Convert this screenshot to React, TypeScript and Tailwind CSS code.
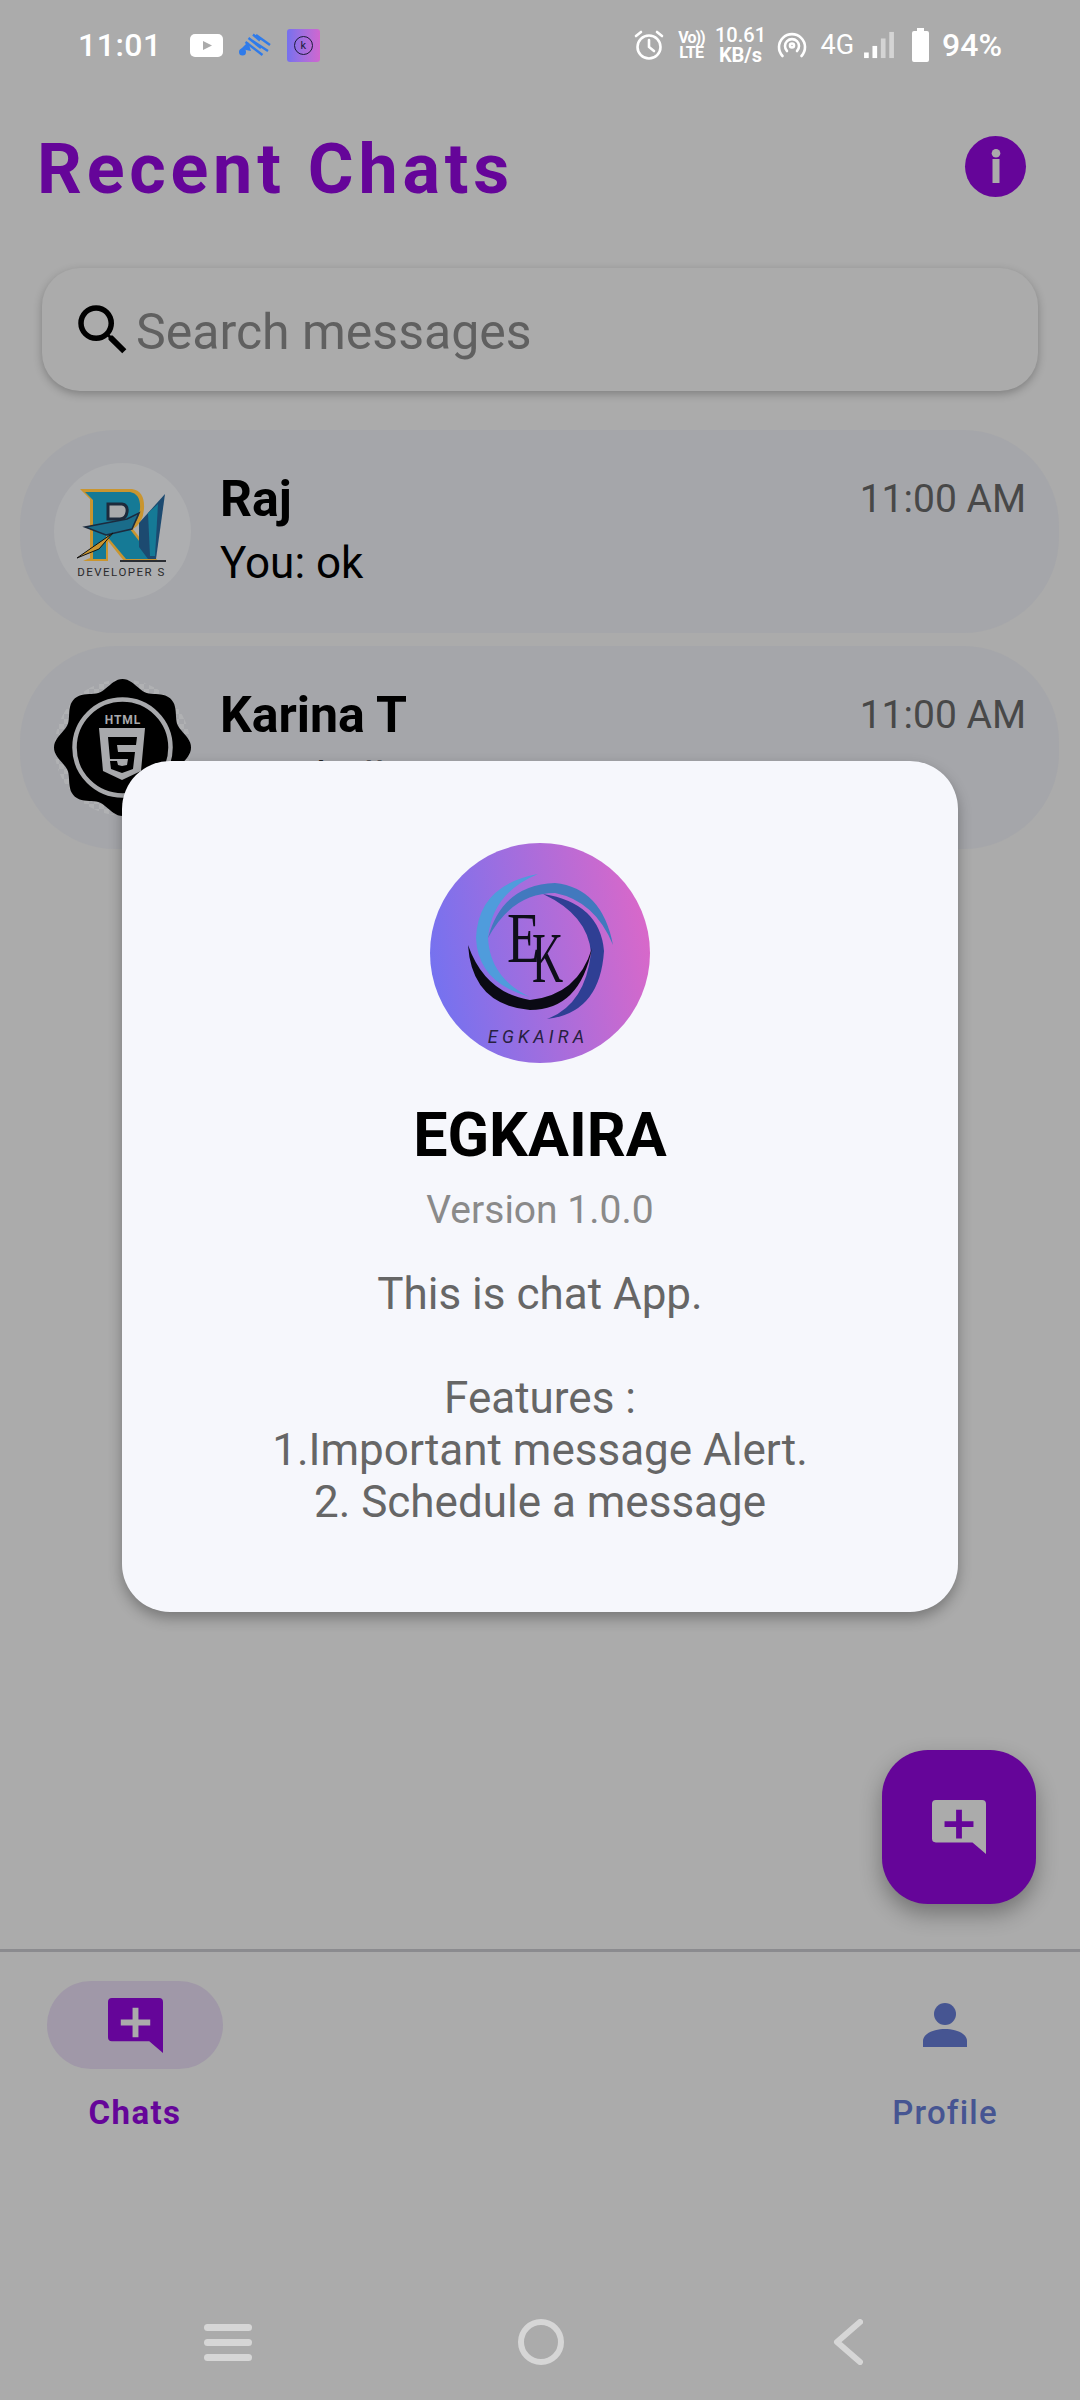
const font = "font-['Roboto',sans-serif]";

// wavy seal outline for the html5 avatar
const sealPath =
  Array.from({ length: 180 }, (_, i) => {
    const t = (i / 180) * Math.PI * 2;
    const r = 64 + 4.5 * Math.cos(8 * t);
    const x = 68.5 + r * Math.sin(t);
    const y = 68.5 - r * Math.cos(t);
    return `${i === 0 ? "M" : "L"}${x.toFixed(1)} ${y.toFixed(1)}`;
  }).join(" ") + "z";

function BubblePlus({ fill, plus, className }: { fill: string; plus: string; className: string }) {
  return (
    <svg viewBox="0 0 56 56" className={className}>
      <path
        d="M4 0h48a4 4 0 0 1 4 4v52L42 44H4a4 4 0 0 1-4-4V4a4 4 0 0 1 4-4z"
        fill={fill}
      />
      <path d="M25 10h6v12h12v6H31v12h-6V28H13v-6h12z" fill={plus} />
    </svg>
  );
}

function StatusBar() {
  return (
    <div className="flex h-[90px] items-center justify-between pl-[78px] pr-[78px] text-white">
      <div className="flex items-center">
        <span className="text-[32px] font-medium leading-none tracking-[0.5px]">11:01</span>
        <svg viewBox="0 0 33 23" className="ml-[28px] h-[23px] w-[33px]">
          <rect width="33" height="23" rx="5" fill="#fff" />
          <path d="M13 7l9 4.500-9 4.500z" fill="#ababab" />
        </svg>
        <svg viewBox="0 0 32 24" className="ml-[16px] h-[24px] w-[32px]">
          <g stroke="#2f7bea" strokeWidth="2.400">
            <path d="M14 1.500l7 6M9.500 5l12.500 10M6.500 9l17 13M12 7l17 11M17 2l14 10" />
          </g>
          <circle cx="3.500" cy="19" r="3.500" fill="#2f7bea" />
          <path d="M2 16L9 9l3 9z" fill="#2f7bea" />
        </svg>
        <div className="relative ml-[16px] flex h-[33px] w-[33px] items-center justify-center rounded-[3px] bg-gradient-to-r from-[#7570ee] to-[#d066cf]">
          <div className="flex h-[19px] w-[19px] items-center justify-center rounded-full border border-[#1b1b3a] text-[11px] leading-none text-[#1b1b3a]">
            k
          </div>
        </div>
      </div>
      <div className="flex items-center">
        {/* alarm */}
        <svg viewBox="0 0 32 32" fill="none" stroke="#fff" strokeWidth="2.600" className="h-[32px] w-[32px]">
          <circle cx="16" cy="18" r="11.500" />
          <path d="M16 11v7l5 4M3 7l5-4M29 7l-5-4" strokeLinecap="round" />
        </svg>
        <div className="ml-[13px] flex w-[26px] flex-col items-center text-[16px] font-bold leading-[15px]">
          <span className="tracking-[-1px]">Vo))</span>
          <span className="tracking-[-0.5px]">LTE</span>
        </div>
        <div className="ml-[12px] flex w-[48px] flex-col items-center text-[20px] font-medium leading-[20px]">
          <span className="whitespace-nowrap">10.61</span>
          <span className="whitespace-nowrap font-bold">KB/s</span>
        </div>
        {/* hotspot */}
        <svg viewBox="0 0 30 28" fill="none" stroke="#fff" strokeWidth="2.600" strokeLinecap="round" className="ml-[13px] h-[28px] w-[30px]">
          <path d="M5.500 25a13 13 0 1 1 19 0" />
          <path d="M10 20a7 7 0 1 1 10 0" />
          <circle cx="15" cy="14.500" r="2" />
        </svg>
        <span className="ml-[13px] text-[27px] font-normal leading-none">4G</span>
        <svg viewBox="0 0 32 30" className="ml-[10px] h-[28px] w-[30px]">
          <rect x="0" y="23" width="5" height="6" fill="#fff" />
          <rect x="9" y="16" width="5" height="13" fill="#fff" />
          <rect x="18" y="8" width="5" height="21" fill="#d4d4d4" />
          <rect x="27" y="1" width="5" height="28" fill="#d4d4d4" />
        </svg>
        <svg viewBox="0 0 17 34" className="ml-[18px] h-[34px] w-[17px]">
          <path d="M5 0h7v3h3a2 2 0 0 1 2 2v27a2 2 0 0 1-2 2H2a2 2 0 0 1-2-2V5a2 2 0 0 1 2-2h3z" fill="#fff" />
        </svg>
        <span className="ml-[13px] text-[32px] font-medium leading-none">94%</span>
      </div>
    </div>
  );
}

function RajLogo() {
  return (
    <svg viewBox="0 0 137 137" className="h-[137px] w-[137px]">
      <circle cx="68.500" cy="68.500" r="68.500" fill="#adaeb0" />
      {/* gold outline, then teal letter on top */}
      <path d="M26 26h52q13 2 12 20-1 14-11 20l25 32H70L54 78v20H29l7-3V36z" fill="#c9952f" />
      <path d="M31 29h45q11 2 10 17-1 13-11 19l24 31H72L52 72v24H39V37z" fill="#157a96" />
      <path d="M54 41h14q6 1 5 8-1 7-7 7H54z" fill="#a9aaac" stroke="#1d2a3c" strokeWidth="3" />
      <path d="M31 64l42-8 12-6-7 16-26 6z" fill="#1a6c8a" stroke="#1c2b3e" strokeWidth="1.500" />
      <path d="M85 60l26-29-9 65H94l-9-12z" fill="#1c4a70" />
      <path d="M94 50l10-9-3 52h-5z" fill="#157a96" />
      <path d="M23 95l36-25-14 16z" fill="#c9952f" stroke="#111" strokeWidth="1" />
      <path d="M66 98h46" stroke="#2a2d33" strokeWidth="2" />
      <text x="67.500" y="113" textAnchor="middle" fontSize="11.500" fontFamily="Roboto" letterSpacing="1.500" fill="#2a2a2c">
        DEVELOPER S
      </text>
    </svg>
  );
}

function HtmlBadge() {
  return (
    <svg viewBox="0 0 137 137" className="h-[137px] w-[137px]">
      <defs>
        <pattern id="checks" width="10" height="10" patternUnits="userSpaceOnUse">
          <rect width="5" height="5" fill="#b0b1b3" />
          <rect x="5" y="5" width="5" height="5" fill="#b0b1b3" />
        </pattern>
      </defs>
      <circle cx="68.500" cy="68.500" r="68" fill="url(#checks)" />
      <path d={sealPath} fill="#000" />
      <circle cx="68.500" cy="68.500" r="48" fill="none" stroke="#a8a9ac" strokeWidth="4.500" />
      <text x="69" y="45" textAnchor="middle" fontSize="12" fontWeight="700" letterSpacing="1" fontFamily="Roboto" fill="#a8a9ac">
        HTML
      </text>
      <path d="M45 49h46l-4 43-19 9-19-9z" fill="#a8a9ac" />
      <path d="M54 58h29l-1 8H63l1 7h17l-2 17-11 4-11-4-1-8h7l1 4 4 1 5-1 1-6H56z" fill="#000" />
    </svg>
  );
}

function EkLogo() {
  return (
    <svg viewBox="0 0 220 220" className="h-[220px] w-[220px]">
      <defs>
        <linearGradient id="ekBg" x1="0" y1="0.6" x2="1" y2="0.4">
          <stop offset="0" stopColor="#7472f0" />
          <stop offset="1" stopColor="#d968c9" />
        </linearGradient>
      </defs>
      <circle cx="110" cy="110" r="110" fill="url(#ekBg)" />
      <path d="M108 31Q48 42 46 95 48 140 100 154 60 135 58 95 62 50 108 31z" fill="#4f9cdc" />
      <path d="M58 95Q72 42 125 40 172 45 183 102 165 58 125 50 82 50 58 95z" fill="#4279be" />
      <path d="M113 51Q170 60 174 108 170 170 117 176 155 162 161 110 158 72 113 51z" fill="#2f3f94" />
      <path d="M38 102Q42 162 100 167 150 167 162 105 148 152 100 157 55 150 38 102z" fill="#0a0a14" />
      <text transform="translate(77 119) scale(0.75 1)" fontSize="72" fontFamily="Liberation Serif" fill="#0e0e1a">E</text>
      <text transform="translate(102 139) scale(0.6 1)" fontSize="72" fontFamily="Liberation Serif" fill="#0e0e1a">K</text>
      <text x="108" y="200" textAnchor="middle" fontSize="18" fontStyle="italic" fontFamily="Roboto" letterSpacing="4.200" fill="#27203f">
        EGKAIRA
      </text>
    </svg>
  );
}

function ChatRow({ name, msg, avatar }: { name: string; msg: string; avatar: React.ReactNode }) {
  return (
    <div className="flex h-[203px] rounded-[96px] bg-[#a5a6aa] pl-[34px] pr-[33px] pt-[33px]">
      {avatar}
      <div className="ml-[29px] flex-1 pt-[4px]">
        <div className="flex items-center justify-between">
          <span className="text-[50px] font-bold leading-[64px] text-black">{name}</span>
          <span className="text-[39px] leading-[64px] text-[#484848]">11:00 AM</span>
        </div>
        <p className="mt-[3px] text-[44px] leading-[58px] text-black">{msg}</p>
      </div>
    </div>
  );
}

export default function App() {
  return (
    <div className={`relative flex h-[2400px] w-[1080px] flex-col overflow-hidden bg-[#ababab] ${font}`}>
      <StatusBar />

      <div className="mt-[34px] flex items-center justify-between pl-[37px] pr-[54px]">
        <h1 className="text-[70px] font-bold leading-[90px] tracking-[4.800px] text-[#650599]">Recent Chats</h1>
        <div className="-mt-[6px] flex h-[61px] w-[61px] items-center justify-center rounded-full bg-[#650599]">
          <svg viewBox="0 0 10 34" className="h-[34px] w-[10px]">
            <circle cx="5" cy="4.300" r="4.300" fill="#ababab" />
            <rect x="1.500" y="10" width="7" height="24" fill="#ababab" />
          </svg>
        </div>
      </div>

      <div className="mx-[42px] mt-[54px] flex h-[123px] items-center rounded-[38px] bg-[#ababab] pl-[28px] shadow-[0_3px_8px_rgba(0,0,0,0.25)]">
        <svg viewBox="0 0 24 24" className="h-[66px] w-[66px]">
          <path
            d="M15.500 14h-.79l-.28-.27A6.471 6.471 0 0 0 16 9.500 6.500 6.500 0 1 0 9.500 16c1.610 0 3.090-.59 4.230-1.570l.27.28v.79l5 4.990L20.490 19l-4.990-5zm-6 0C7.010 14 5 11.990 5 9.500S7.010 5 9.500 5 14 7.010 14 9.500 11.990 14 9.500 14z"
            fill="#000"
          />
        </svg>
        <span className="pt-[5px] text-[50px] text-[#606060]">Search messages</span>
      </div>

      <div className="ml-[20px] mr-[21px] mt-[39px] flex flex-col gap-[13px]">
        <ChatRow name="Raj" msg="You: ok" avatar={<RajLogo />} />
        <ChatRow name="Karina T" msg="You: hello" avatar={<HtmlBadge />} />
      </div>

      {/* fab */}
      <div className="absolute left-[882px] top-[1750px] flex h-[154px] w-[154px] items-center justify-center rounded-[46px] bg-[#650599] shadow-[0_10px_22px_rgba(0,0,0,0.32)]">
        <BubblePlus fill="#ababab" plus="#650599" className="h-[54px] w-[54px]" />
      </div>

      {/* bottom tabs */}
      <div className="mt-auto">
        <div className="h-[3px] bg-[#8b8b8f]" />
        <div className="flex h-[448px] items-start justify-between pl-[47px] pr-[81px] pt-[29px]">
          <div className="flex w-[176px] flex-col items-center">
            <div className="flex h-[88px] w-[176px] items-center justify-center rounded-[44px] bg-[#a098a8]">
              <BubblePlus fill="#650599" plus="#ababab" className="h-[55px] w-[55px]" />
            </div>
            <span className="mt-[22px] text-[33px] font-bold leading-[44px] tracking-[1.400px] text-[#650599]">Chats</span>
          </div>
          <div className="flex w-[108px] flex-col items-center">
            <div className="flex h-[88px] items-center justify-center">
              <svg viewBox="0 0 44 44" className="h-[44px] w-[44px]">
                <ellipse cx="22" cy="11" rx="11" ry="11" fill="#465592" />
                <path d="M0 44v-6c0-8 12-12 22-12s22 4 22 12v6z" fill="#465592" />
              </svg>
            </div>
            <span className="mt-[22px] text-[33px] font-medium leading-[44px] tracking-[1.200px] text-[#465592]">Profile</span>
          </div>
        </div>
      </div>

      {/* system nav */}
      <div className="absolute bottom-[35px] left-0 flex w-full items-center">
        <div className="ml-[204px] flex w-[48px] flex-col gap-[8px]">
          <div className="h-[7px] rounded bg-[#d6d6d6]" />
          <div className="h-[7px] rounded bg-[#d6d6d6]" />
          <div className="h-[7px] rounded bg-[#d6d6d6]" />
        </div>
        <div className="ml-[266px] h-[46px] w-[46px] rounded-full border-[6px] border-[#d6d6d6]" />
        <svg viewBox="0 0 30 46" fill="none" className="ml-[269px] h-[46px] w-[30px]">
          <path d="M27 3L4 23l23 20" stroke="#d6d6d6" strokeWidth="6" strokeLinecap="round" strokeLinejoin="round" />
        </svg>
      </div>

      {/* about dialog */}
      <div className="absolute left-[122px] top-[761px] flex h-[851px] w-[836px] flex-col items-center rounded-[48px] bg-[#f6f7fc] pt-[82px] shadow-[0_6px_14px_rgba(0,0,0,0.3)]">
        <EkLogo />
        <h2 className="mt-[38px] text-[61px] font-bold leading-[68px] text-black">EGKAIRA</h2>
        <p className="mt-[16px] text-[39px] leading-[50px] text-[#8a8a8a]">Version 1.0.0</p>
        <div className="mt-[33px] text-center text-[44px] leading-[52px] text-[#666666]">
          <p>This is chat App.</p>
          <p className="mt-[52px]">Features :</p>
          <p>1.Important message Alert.</p>
          <p>2. Schedule a message</p>
        </div>
      </div>
    </div>
  );
}
